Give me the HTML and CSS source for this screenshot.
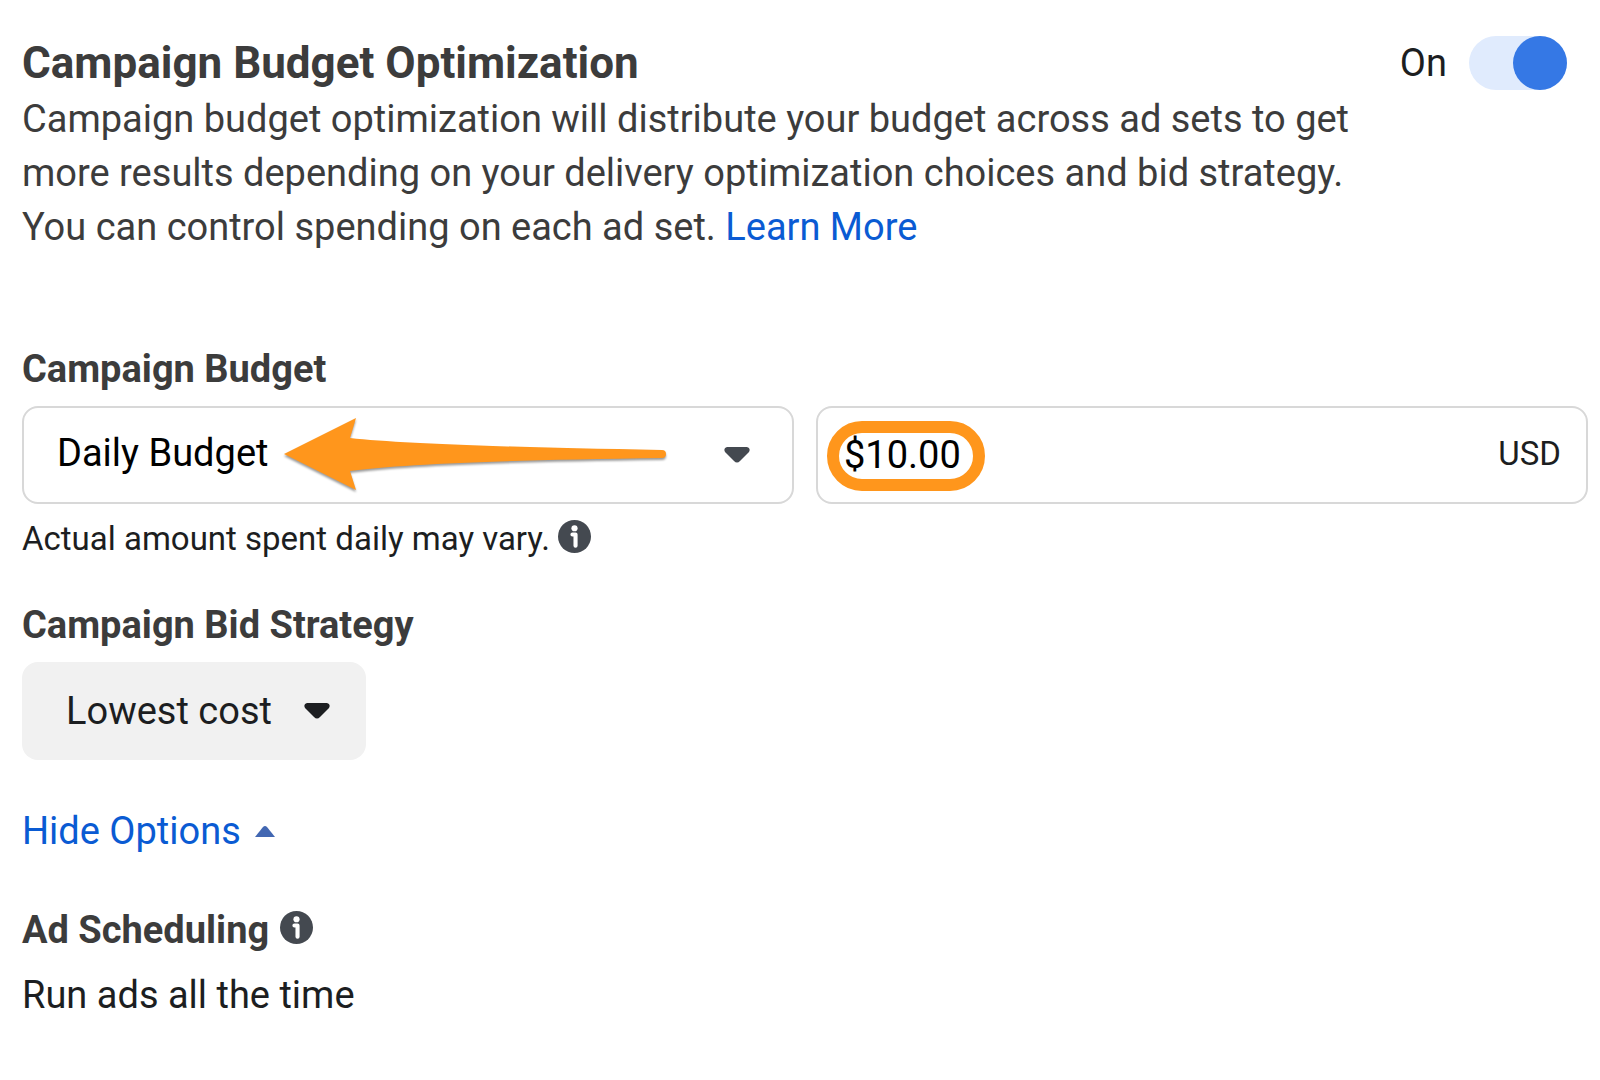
FILE: index.html
```html
<!DOCTYPE html>
<html lang="en">

<head>
    <meta charset="UTF-8">
    <meta name="viewport" content="width=device-width, initial-scale=1.0">
    <title>Campaign Budget Optimization</title>
    <link rel="stylesheet" href="styles.css">
</head>

<body>

    <header class="intro">
        <div class="intro-text">
            <h1>Campaign Budget Optimization</h1>
            <p class="description">Campaign budget optimization will distribute your budget across ad sets to get more results depending on your delivery optimization choices and bid strategy. You can control spending on each ad set. <a href="#">Learn More</a></p>
        </div>
        <div class="toggle">
            <label for="cbo">On</label>
            <input type="checkbox" id="cbo" role="switch" checked>
        </div>
    </header>

    <section class="budget">
        <h2><label for="budget-type">Campaign Budget</label></h2>
        <div class="fields">
            <div class="field">
                <select id="budget-type">
                    <option>Daily Budget</option>
                    <option>Lifetime Budget</option>
                </select>
                <svg class="caret" viewBox="0 0 26 16" aria-hidden="true">
                    <path d="M3 0H23Q27 1 25 5L16 14Q13 17 10 14L1 5Q-1 1 3 0Z"/>
                </svg>
                <svg class="arrow" viewBox="0 0 384 74" aria-hidden="true">
                    <path d="M0 37L72 1L66 21Q140 29 378 33Q382 33 382 37Q382 41 378 41Q140 44 66 54L72 73Z"/>
                </svg>
            </div>
            <div class="field">
                <input type="text" id="amount" value="$10.00" aria-label="Budget amount">
                <label class="currency" for="amount">USD</label>
                <span class="highlight"></span>
            </div>
        </div>
        <p class="note">Actual amount spent daily may vary.
            <svg class="info" viewBox="0 0 32 32" aria-hidden="true">
                <circle class="info-bg" cx="16" cy="16" r="16"/>
                <circle class="info-dot" cx="16" cy="8" r="3"/>
                <path class="info-stem" d="M14 14H17V25"/>
            </svg>
        </p>
    </section>

    <section class="strategy">
        <h2>Campaign Bid Strategy</h2>
        <button type="button" class="strategy-button">Lowest cost
            <svg class="caret" viewBox="0 0 26 16" aria-hidden="true">
                <path d="M3 0H23Q27 1 25 5L16 14Q13 17 10 14L1 5Q-1 1 3 0Z"/>
            </svg>
        </button>
    </section>

    <a class="hide-options" href="#">Hide Options
        <svg class="caret-up" viewBox="0 0 20 12" aria-hidden="true">
            <path d="M0 12L8 2Q10 0 12 2L20 12Z"/>
        </svg>
    </a>

    <section class="scheduling">
        <h2>Ad Scheduling
            <svg class="info" viewBox="0 0 32 32" aria-hidden="true">
                <circle class="info-bg" cx="16" cy="16" r="16"/>
                <circle class="info-dot" cx="16" cy="8" r="3"/>
                <path class="info-stem" d="M14 14H17V25"/>
            </svg>
        </h2>
        <p>Run ads all the time</p>
    </section>

</body>

</html>
```
FILE: styles.css
```css
* {
    box-sizing: border-box;
}

body {
    font-family: Roboto, sans-serif;
    font-size: 38px;
    line-height: 54px;
    background-color: #fff;
    color: #1c1e21;
    margin: 0;
    padding: 36px 12px 36px 22px;
}

h1,
h2,
p {
    margin: 0;
}

h1,
h2 {
    color: #3c3c3c;
    font-weight: bold;
}

h1 {
    font-size: 44px;
}

h2 {
    font-size: 38px;
}

a {
    color: #0a5bd3;
    text-decoration: none;
}

.intro {
    display: flex;
    justify-content: space-between;
    align-items: flex-start;
    padding-right: 21px;
}

.intro-text {
    max-width: 1345px;
}

.description {
    margin-top: 2px;
    color: #3c3c3c;
}

.toggle {
    display: flex;
    align-items: center;
    gap: 22px;
}

.toggle input {
    appearance: none;
    width: 98px;
    height: 54px;
    margin: 0;
    border-radius: 27px;
    background-color: #e0ebfd;
    cursor: pointer;
}

.toggle input::before {
    content: "";
    display: block;
    width: 54px;
    height: 54px;
    border-radius: 50%;
    background-color: #3578e5;
}

.toggle input:checked::before {
    margin-left: auto;
}

.budget {
    margin-top: 88px;
}

.fields {
    display: grid;
    grid-template-columns: 1fr 1fr;
    gap: 22px;
    margin-top: 10px;
}

.field {
    position: relative;
    display: flex;
    align-items: center;
    height: 98px;
    border: 2px solid #d8d8d8;
    border-radius: 16px;
}

.field select,
.field input {
    appearance: none;
    flex: 1;
    min-width: 0;
    height: 100%;
    border: none;
    background: none;
    color: #000;
    font: inherit;
}

.field select {
    padding: 0 33px 4px;
}

.field input {
    padding: 0 26px;
}

.field .caret {
    margin-right: 42px;
    fill: #444950;
}

.caret {
    width: 26px;
    height: 16px;
}

.arrow {
    position: absolute;
    left: 260px;
    top: 9px;
    width: 384px;
    height: 74px;
    fill: #ff961c;
    filter: drop-shadow(0 2px 1px #0006);
    pointer-events: none;
    overflow: visible;
}

.highlight {
    position: absolute;
    left: 9px;
    top: 13px;
    width: 158px;
    height: 70px;
    border: 12px solid #ff961c;
    border-radius: 35px;
    pointer-events: none;
}

.currency {
    margin-right: 25px;
    padding-bottom: 2px;
    font-size: 33px;
}

.note {
    display: flex;
    align-items: center;
    gap: 8px;
    margin-top: 8px;
    font-size: 33px;
}

.info {
    width: 33px;
    height: 33px;
    margin-bottom: 6px;
}

.info-bg {
    fill: #444950;
}

.info-dot {
    fill: #fff;
}

.info-stem {
    fill: none;
    stroke: #fff;
    stroke-width: 4;
    stroke-linecap: round;
    stroke-linejoin: round;
}

.strategy {
    margin-top: 32px;
}

.strategy-button {
    display: flex;
    align-items: center;
    gap: 32px;
    height: 98px;
    margin-top: 10px;
    padding: 0 36px 0 44px;
    border: none;
    border-radius: 16px;
    background-color: #f1f1f1;
    color: #1c1e21;
    font: inherit;
    cursor: pointer;
}

.strategy-button .caret {
    fill: #1c1e21;
}

.hide-options {
    display: flex;
    align-items: center;
    gap: 14px;
    width: fit-content;
    margin-top: 44px;
}

.caret-up {
    width: 20px;
    height: 12px;
    fill: #4267b2;
}

.scheduling {
    margin-top: 45px;
}

.scheduling h2 {
    display: flex;
    align-items: center;
    gap: 11px;
    margin-bottom: 11px;
}
```
